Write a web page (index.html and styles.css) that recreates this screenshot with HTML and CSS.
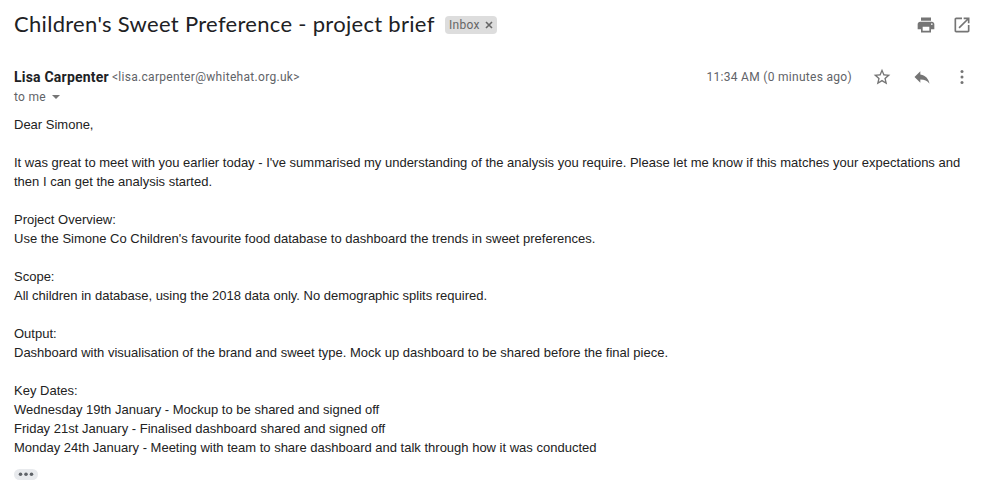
FILE: index.html
```html
<!DOCTYPE html>
<html lang="en">
<head>
<meta charset="utf-8">
<title>Children's Sweet Preference - project brief</title>
<link rel="stylesheet" href="styles.css">
</head>
<body>
<main class="mail">
  <header class="subject-row">
    <h1 class="subject"><span>Children's Sweet Preference - project brief</span></h1>
    <div class="label"><span class="label-name">Inbox</span><svg class="label-x" viewBox="0 0 8 8"><path d="M1 1l6 6M7 1L1 7"/></svg></div>
    <div class="tools">
      <svg class="icon" viewBox="0 0 24 24"><path d="M19 8H5c-1.66 0-3 1.34-3 3v6h4v4h12v-4h4v-6c0-1.66-1.34-3-3-3zm-3 11H8v-5h8v5zm3-7c-.55 0-1-.45-1-1s.45-1 1-1 1 .45 1 1-.45 1-1 1zm-1-9H6v4h12V3z"/></svg>
      <svg class="icon" viewBox="0 0 24 24"><path d="M19 19H5V5h7V3H5c-1.11 0-2 .9-2 2v14c0 1.1.89 2 2 2h14c1.1 0 2-.9 2-2v-7h-2v7zM14 3v2h3.59l-9.83 9.83 1.41 1.41L19 6.41V10h2V3h-7z"/></svg>
    </div>
  </header>
  <section class="sender-row">
    <div class="sender"><b class="name">Lisa Carpenter</b><span class="email">&lt;lisa.carpenter@whitehat.org.uk&gt;</span></div>
    <div class="meta">
      <span class="time">11:34 AM (0 minutes ago)</span>
      <svg class="icon" viewBox="0 0 24 24"><path d="M22 9.24l-7.19-.62L12 2 9.19 8.63 2 9.24l5.46 4.73L5.82 21 12 17.27 18.18 21l-1.63-7.03L22 9.24zM12 15.4l-3.76 2.27 1-4.28-3.32-2.88 4.38-.38L12 6.1l1.71 4.04 4.38.38-3.32 2.88 1 4.28L12 15.4z"/></svg>
      <svg class="icon" viewBox="0 0 24 24"><path d="M10 9V5l-7 7 7 7v-4.1c5 0 8.5 1.6 11 5.1-1-5-4-10-11-11z"/></svg>
      <svg class="icon" viewBox="0 0 20 20"><circle cx="10" cy="4.5" r="1.5"/><circle cx="10" cy="10" r="1.5"/><circle cx="10" cy="15.5" r="1.5"/></svg>
    </div>
  </section>
  <div class="recipient"><span class="to">to me</span><i class="caret"></i></div>
  <article class="body">
    <p>Dear Simone,</p>
    <p><span>It was great to meet with you earlier today - I've summarised my understanding of the analysis you require. Please let me know if this matches your expectations and</span><br><span>then I can get the analysis started.</span></p>
    <p>Project Overview:<br><span>Use the Simone Co Children's favourite food database to dashboard the trends in sweet preferences.</span></p>
    <p>Scope:<br><span>All children in database, using the 2018 data only. No demographic splits required.</span></p>
    <p>Output:<br><span>Dashboard with visualisation of the brand and sweet type. Mock up dashboard to be shared before the final piece.</span></p>
    <p>Key Dates:<br><span>Wednesday 19th January - Mockup to be shared and signed off</span><br><span>Friday 21st January - Finalised dashboard shared and signed off</span><br><span>Monday 24th January - Meeting with team to share dashboard and talk through how it was conducted</span></p>
  </article>
  <svg class="trimmed" viewBox="0 0 24 11"><rect width="24" height="11" rx="5.5"/><g><circle cx="6.5" cy="5.3" r="1.8"/><circle cx="12" cy="5.3" r="1.8"/><circle cx="17.5" cy="5.3" r="1.8"/></g></svg>
</main>
</body>
</html>
```
FILE: styles.css
```css
* { box-sizing: border-box; }
body { margin: 0; background: #fff; color: #222; font-family: "Liberation Sans", Arial, sans-serif; }
.mail { width: 986px; height: 496px; padding: 9px 14px 0; overflow: hidden; white-space: nowrap; }
.subject-row { display: flex; align-items: center; height: 32px; }
.subject { margin: 0; padding-bottom: 2px; font: 400 22px/30px Lato, sans-serif; letter-spacing: .3px; color: #202124; width: 431px; }
.label { display: flex; align-items: center; justify-content: space-between; width: 52px; height: 18px; padding: 0 4px; background: #ddd; border-radius: 4px; color: #666; font: 400 12px/18px Roboto, sans-serif; letter-spacing: .3px; }
.label-x { width: 8px; height: 8px; fill: none; stroke: #666; stroke-width: 1.6; }
.tools { display: flex; gap: 16px; margin-left: auto; }
.icon { width: 20px; height: 20px; fill: #757575; flex: none; }
.sender-row { display: flex; justify-content: space-between; align-items: center; height: 20px; margin-top: 26px; }
.sender { display: flex; align-items: center; gap: 3px; height: 20px; }
.name { font: 700 14px/20px Roboto, sans-serif; letter-spacing: .21px; padding-bottom: 1px; color: #202124; }
.email, .time, .to { font: 400 12px/20px Roboto, sans-serif; color: #5f6368; letter-spacing: .3px; }
.meta { display: flex; align-items: center; gap: 20px; }
.recipient { display: flex; align-items: center; gap: 6px; height: 20px; }
.caret { border: 4px solid transparent; border-top-color: #757575; border-bottom: 0; }
.body { margin-top: 8px; font-size: 13px; line-height: 19px; }
.body p { margin: 0 0 19px; }
.trimmed { display: block; width: 24px; height: 11px; margin-top: -7px; fill: #e8eaed; }
.trimmed g { fill: #5f6368; }
```
